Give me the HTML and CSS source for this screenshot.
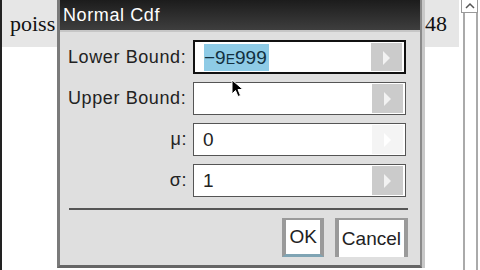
FILE: index.html
```html
<!DOCTYPE html>
<html lang="en">
<head>
    <meta charset="UTF-8">
    <title>Normal Cdf</title>
    <link rel="stylesheet" href="styles.css">
</head>
<body>
    <div class="screen">
        <div class="doc">
            <div class="doc-row">
                <span class="cell-left">poiss</span>
                <span class="cell-right">48</span>
            </div>
        </div>
        <div class="scrollbar">
            <div class="scroll-up">
                <svg width="12" height="8" viewBox="0 0 12 8"><path d="M2 6 L6 2 L10 6" fill="none" stroke="#555" stroke-width="1.5"/></svg>
            </div>
            <div class="scroll-track"></div>
        </div>

        <div class="dialog">
            <div class="dialog-title">Normal Cdf</div>
            <div class="dialog-body">
                <div class="field">
                    <label class="field-label">Lower Bound:</label>
                    <div class="field-box focused">
                        <span class="field-value"><span class="selected">−9<span class="exp">E</span>999</span></span>
                        <span class="field-arrow"></span>
                    </div>
                </div>
                <div class="field">
                    <label class="field-label">Upper Bound:</label>
                    <div class="field-box">
                        <span class="field-value"></span>
                        <span class="field-arrow"></span>
                    </div>
                </div>
                <div class="field">
                    <label class="field-label right">μ:</label>
                    <div class="field-box">
                        <span class="field-value">0</span>
                        <span class="field-arrow faint"></span>
                    </div>
                </div>
                <div class="field">
                    <label class="field-label right">σ:</label>
                    <div class="field-box">
                        <span class="field-value">1</span>
                        <span class="field-arrow"></span>
                    </div>
                </div>
                <div class="separator"></div>
                <div class="buttons">
                    <button class="btn ok">OK</button>
                    <button class="btn">Cancel</button>
                </div>
            </div>
        </div>

        <svg class="cursor" width="14" height="20" viewBox="0 0 14 20">
            <path d="M1 1 L1 15 L4.5 11.5 L7 17.5 L9.5 16.5 L7 10.5 L12 10.5 Z" fill="#000" stroke="#fff" stroke-width="1"/>
        </svg>
    </div>
</body>
</html>
```

FILE: styles.css
```css
body {
    margin: 0;
    background: #fff;
    font-family: "Liberation Sans", Arial, sans-serif;
}

.screen {
    position: relative;
    width: 480px;
    height: 270px;
    overflow: hidden;
    display: flex;
}

.doc {
    width: 457px;
    border-left: 2px solid #222;
}

.doc-row {
    height: 47px;
    background: #e6e6e6;
    display: flex;
    justify-content: space-between;
    align-items: center;
    font-family: "Liberation Serif", "Times New Roman", serif;
    font-size: 22px;
    color: #111;
}

.cell-left {
    padding-left: 8px;
}

.cell-right {
    padding-right: 12px;
}

.scrollbar {
    width: 18px;
    margin-left: 2px;
    display: flex;
    flex-direction: column;
}

.scroll-up {
    height: 12px;
    border: 1px solid #999;
    border-top: none;
    display: flex;
    justify-content: center;
    align-items: center;
    width: 15px;
}

.scroll-track {
    flex: 1;
    width: 11px;
    margin-left: 2px;
    border-left: 2px solid #aaa;
    border-right: 2px solid #aaa;
}

.dialog {
    position: absolute;
    left: 57px;
    top: 0;
    width: 360px;
    height: 265px;
    background: #dfdfdf;
    border-left: 3px solid #7a7a7a;
    border-right: 2px solid #8a8a8a;
    border-bottom: 3px solid #666;
    box-shadow: 3px 0 0 #c8c8c8;
}

.dialog-title {
    height: 30px;
    line-height: 30px;
    padding-left: 3px;
    color: #fff;
    font-size: 18px;
    letter-spacing: 0.6px;
    background: linear-gradient(#1c1c1c, #3e3e3e);
    border-bottom: 2px solid #c6c6c6;
}

.dialog-body {
    padding: 8px 12px 0 8px;
    display: flex;
    flex-direction: column;
    gap: 8px;
}

.field {
    display: grid;
    grid-template-columns: 125px 213px;
    align-items: center;
}

.field-label {
    font-size: 18px;
    color: #222;
    letter-spacing: 0.6px;
}

.field-label.right {
    text-align: right;
    padding-right: 6px;
}

.field-box {
    height: 31px;
    background: #fff;
    border: 1px solid #555;
    display: flex;
    align-items: stretch;
}

.field-box.focused {
    height: 30px;
    border: 2px solid #111;
}

.field-value {
    flex: 1;
    display: flex;
    align-items: center;
    padding-left: 9px;
    font-size: 19px;
    color: #222;
}

.selected {
    background: #8ecbe6;
    color: #123040;
    padding: 3px 2px 2px 0;
}

.exp {
    font-size: 14px;
}

.field-arrow {
    width: 31px;
    margin: 1px 2px 1px 0;
    background: #cbcbcb;
    position: relative;
}

.field-arrow.faint {
    background: #f4f4f4;
}

.field-arrow::after {
    content: "";
    position: absolute;
    left: 12px;
    top: 8px;
    border-left: 7px solid #f2f2f2;
    border-top: 7px solid transparent;
    border-bottom: 7px solid transparent;
}

.field-arrow.faint::after {
    border-left-color: #fff;
}

.separator {
    height: 2px;
    margin: 3px 0 0 1px;
    background: #555;
}

.buttons {
    display: flex;
    justify-content: flex-end;
    gap: 11px;
}

.btn {
    height: 39px;
    padding: 0 3px;
    background: #fff;
    border: none;
    border-top: 2px solid #9a9a9a;
    border-left: 4px solid #9a9a9a;
    border-right: 4px solid #9a9a9a;
    font-family: "Liberation Sans", Arial, sans-serif;
    font-size: 19px;
    color: #222;
}

.btn.ok {
    border-bottom: 3px solid #7fa4b4;
}

.cursor {
    position: absolute;
    left: 231px;
    top: 79px;
}
```
